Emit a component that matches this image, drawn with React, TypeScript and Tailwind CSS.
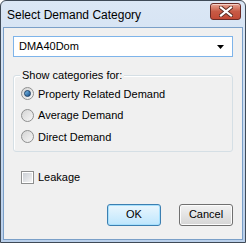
import React from "react";

const font = { fontFamily: '"Liberation Sans", Arial, sans-serif' };

function CloseButton() {
  return (
    <div className="flex h-[17px] w-[31px] items-center justify-center rounded-[3px] border border-[#6b2b26] bg-gradient-to-b from-[#e8a493] via-[#c75a45] to-[#c24a36] shadow-[inset_0_1px_0_rgba(255,255,255,0.5)]">
      <svg width="14" height="11" viewBox="0 0 14 11">
        <path
          d="M2 1.5 L12 9.5 M12 1.5 L2 9.5"
          stroke="#5a2a20"
          strokeWidth="4"
          strokeLinecap="square"
        />
        <path
          d="M2 1.5 L12 9.5 M12 1.5 L2 9.5"
          stroke="#ffffff"
          strokeWidth="2.2"
          strokeLinecap="square"
        />
      </svg>
    </div>
  );
}

function Radio({ checked, label }: { checked?: boolean; label: string }) {
  return (
    <label className="flex h-[21.5px] items-center gap-[4px]">
      <span className="flex h-[13px] w-[13px] items-center justify-center rounded-full border border-[#8e8f8f] bg-gradient-to-br from-[#d4d4d4] to-[#f7f7f7]">
        {checked && (
          <span className="h-[7px] w-[7px] rounded-full border border-[#1b3f66] bg-gradient-to-br from-[#7fc0ec] to-[#14518c]" />
        )}
      </span>
      <span className="text-[11px] text-black">{label}</span>
    </label>
  );
}

export default function App() {
  return (
    <div className="h-[243px] w-[246px] bg-white" style={font}>
      <div className="flex h-full w-full flex-col rounded-t-[6px] border border-[#3f4a57] bg-gradient-to-b from-[#dbe7f5] to-[#b9cfea]">
        <div className="flex h-[26px] shrink-0 items-center justify-between pl-[6px] pr-[4px]">
          <span className="mt-[2px] text-[12px] text-black">Select Demand Category</span>
          <div className="-mt-[6px]">
            <CloseButton />
          </div>
        </div>
        <div className="mx-[2px] mb-[2px] flex flex-1 flex-col border border-[#7a9fc8] bg-[#f0f0f0] px-[9px] pt-[8px]">
          <div className="flex h-[21px] items-center justify-between border border-[#7eb4ea] bg-white pl-[5px] pr-[7px]">
            <span className="text-[11px] text-black">DMA40Dom</span>
            <svg width="8" height="4" viewBox="0 0 8 4">
              <path d="M0 0 H7 L3.5 4 Z" fill="#000" />
            </svg>
          </div>
          <div className="relative mt-[18px] h-[77px] rounded-[3px] border border-[#d5dfe5] shadow-[inset_1px_1px_0_#ffffff]">
            <span className="absolute -top-[9px] left-[6px] bg-[#f0f0f0] px-[2px] text-[11px] leading-[16px] text-black">
              Show categories for:
            </span>
            <div className="flex flex-col pl-[7px] pt-[7px]">
              <Radio checked label="Property Related Demand" />
              <Radio label="Average Demand" />
              <Radio label="Direct Demand" />
            </div>
          </div>
          <label className="mt-[17px] flex items-center gap-[4px] pl-[8px]">
            <span className="flex h-[13px] w-[13px] items-center justify-center border border-[#8e8f8f] bg-white">
              <span className="h-[9px] w-[9px] bg-gradient-to-br from-[#cbcfd5] to-[#f4f4f4]" />
            </span>
            <span className="text-[11px] text-black">Leakage</span>
          </label>
          <div className="mt-[18px] flex justify-end gap-[18px]">
            <button className="h-[22px] w-[54px] rounded-[3px] border border-[#3c7fb1] bg-gradient-to-b from-[#eaf6fd] to-[#bee6fd] text-[11px] text-black shadow-[inset_0_0_0_1px_#a6e0fd]">
              OK
            </button>
            <button className="h-[22px] w-[54px] rounded-[3px] border border-[#707070] bg-gradient-to-b from-[#f2f2f2] to-[#d5d5d5] text-[11px] text-black shadow-[inset_0_0_0_1px_#fcfcfc]">
              Cancel
            </button>
          </div>
        </div>
      </div>
    </div>
  );
}
